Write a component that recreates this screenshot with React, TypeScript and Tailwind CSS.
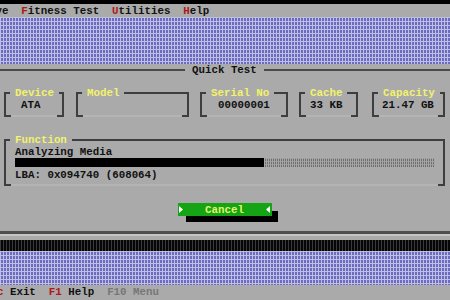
const mono = "font-['Liberation_Mono','DejaVu_Sans_Mono',monospace]";

const blueHatch =
  "bg-[#6c6cbe] bg-[linear-gradient(90deg,#bebee6_1px,transparent_1px),linear-gradient(#bebee6_1px,transparent_1px)] bg-[length:3px_4px]";

// groove frame: dark top/sides, faint bottom with dark corner ticks
const frame = "relative border-2 border-[#3e3e3e] border-b-[#b4b4b4]";

function Ticks() {
  return (
    <>
      <span className="absolute -bottom-[2px] -left-[2px] w-[7px] h-[2px] bg-[#3e3e3e]" />
      <span className="absolute -bottom-[2px] -right-[2px] w-[7px] h-[2px] bg-[#3e3e3e]" />
    </>
  );
}

type BoxProps = {
  label: string;
  value?: string;
  width: string;
  indent: string;
};

function InfoBox({ label, value, width, indent }: BoxProps) {
  return (
    <fieldset className={`${width} shrink-0 ${frame}`}>
      <legend className="ml-[4px] px-[5px] text-[#f2f26c]">{label}</legend>
      <div className={`${indent} h-[12px] whitespace-pre`}>{value ?? ""}</div>
      <div className="h-[4px]" />
      <Ticks />
    </fieldset>
  );
}

function Tri({ dir }: { dir: "right" | "left" }) {
  return (
    <svg width="4" height="7" viewBox="0 0 4 7" className="shrink-0">
      {dir === "right" ? (
        <path d="M0 0 L4 3.5 L0 7 Z" fill="#ffffff" />
      ) : (
        <path d="M4 0 L0 3.5 L4 7 Z" fill="#ffffff" />
      )}
    </svg>
  );
}

export default function App() {
  return (
    <div
      className={`w-[450px] h-[300px] overflow-hidden bg-[#aaaaaa] text-[#111] font-bold text-[10.8px] leading-[12px] ${mono} flex flex-col`}
    >
      {/* top black strip */}
      <div className="h-[4px] shrink-0 bg-black" />

      {/* menu bar */}
      <div className="h-[13px] shrink-0 pt-[1px] whitespace-pre">
        <span className="-ml-[24px] inline-block">
          <span>Drive  </span>
          <span className="text-[#b01818]">F</span>
          <span>itness Test  </span>
          <span className="text-[#b01818]">U</span>
          <span>tilities  </span>
          <span className="text-[#b01818]">H</span>
          <span>elp</span>
        </span>
      </div>

      {/* desktop */}
      <div className={`h-[47px] shrink-0 ${blueHatch}`} />

      {/* Quick Test window */}
      <div className="h-[167px] shrink-0 flex flex-col">
        <div className="h-[12px] flex items-center">
          <div className="w-[185px] h-[2px] bg-[#4a4a4a]" />
          <span className="w-[79px] pl-[7px] whitespace-pre">Quick Test</span>
          <div className="flex-1 h-[2px] bg-[#4a4a4a]" />
        </div>

        <div className="mt-[11px] flex pl-[4px]">
          <InfoBox label="Device" value="ATA" width="w-[60px]" indent="pl-[15px]" />
          <div className="w-[12px] shrink-0" />
          <InfoBox label="Model" width="w-[113px]" indent="pl-[9px]" />
          <div className="w-[11px] shrink-0" />
          <InfoBox label="Serial No" value="00000001" width="w-[88px]" indent="pl-[16px]" />
          <div className="w-[11px] shrink-0" />
          <InfoBox label="Cache" value="33 KB" width="w-[59px]" indent="pl-[9px]" />
          <div className="w-[14px] shrink-0" />
          <InfoBox label="Capacity" value="21.47 GB" width="w-[73px]" indent="pl-[8px]" />
        </div>

        <fieldset className={`mt-[17px] ml-[4px] w-[441px] ${frame}`}>
          <legend className="ml-[4px] px-[5px] text-[#f2f26c]">Function</legend>
          <div className="pl-[9px] pr-[8px]">
            <div className="h-[12px]">Analyzing Media</div>
            <div className="h-[9px] flex">
              <div className="w-[249px] bg-black" />
              <div className="flex-1 bg-[#6e6e6e] bg-[linear-gradient(90deg,#a6a6a6_1px,transparent_1px),linear-gradient(#9a9a9a_1px,transparent_1px)] bg-[length:2px_3px]" />
            </div>
            <div className="mt-[2px] h-[12px] whitespace-pre">LBA: 0x094740 (608064)</div>
            <div className="h-[3px]" />
          </div>
          <Ticks />
        </fieldset>

        <div className="mt-[17px] ml-[178px] w-[94px] h-[13px] bg-[#14a414] shadow-[7px_7px_0_-1px_#000] flex items-center justify-between pl-[1px] pr-[2px]">
          <Tri dir="right" />
          <span className="text-[#e4f46c]">Cancel</span>
          <Tri dir="left" />
        </div>
      </div>

      {/* window bottom edge */}
      <div className="h-[3px] shrink-0 bg-[#4e4e4e]" />
      <div className="h-[2px] shrink-0 bg-[#c4c4c4]" />
      <div className="h-[4px] shrink-0" />

      {/* dark strip */}
      <div className="h-[11px] shrink-0 bg-[#060606] bg-[linear-gradient(90deg,#3a3a3a_1px,transparent_1px)] bg-[length:3px_4px]" />

      {/* desktop */}
      <div className={`h-[34px] shrink-0 ${blueHatch}`} />

      {/* status bar */}
      <div className="h-[15px] shrink-0 pt-[1px] whitespace-pre">
        <span className="-ml-[16px] inline-block">
          <span className="text-[#b01818]">Esc</span>
          <span> Exit  </span>
          <span className="text-[#b01818]">F1</span>
          <span> Help  </span>
          <span className="text-[#777777]">F10 Menu</span>
        </span>
      </div>
    </div>
  );
}
